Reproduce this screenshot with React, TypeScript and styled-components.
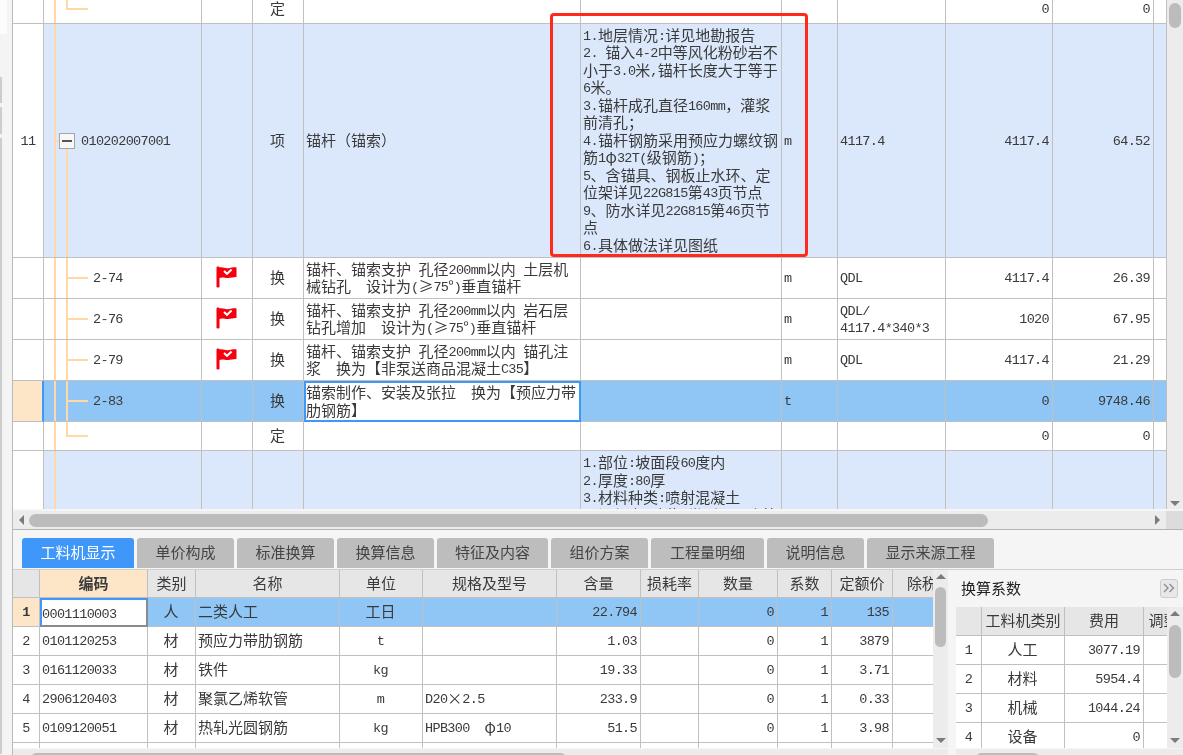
import { Fragment } from "react";
import { createGlobalStyle, styled } from "styled-components";

type Tree = "none" | "parent" | "child" | "last";
type Tone = "plain" | "item" | "active";

interface TopRow {
  h: number;
  tone: Tone;
  no?: string;
  tree: Tree;
  code?: string;
  flag?: boolean;
  kind?: string;
  name?: string;
  spec?: string;
  unit?: string;
  expr?: string;
  qty?: string;
  price?: string;
  editing?: boolean;
}

const featureText = `1.地层情况:详见地勘报告
2. 锚入4-2中等风化粉砂岩不小于3.0米,锚杆长度大于等于6米。
3.锚杆成孔直径160mm\uFF0C灌浆前清孔\uFF1B
4.锚杆钢筋采用预应力螺纹钢筋1φ32T(级钢筋)\uFF1B
5、含锚具、钢板止水环、定位架详见22G815第43页节点
9、防水详见22G815第46页节点
6.具体做法详见图纸`;

const topRows: TopRow[] = [
  { h: 29, tone: "plain", tree: "last", kind: "定", qty: "0", price: "0" },
  {
    h: 234,
    tone: "item",
    no: "11",
    tree: "parent",
    code: "010202007001",
    kind: "项",
    name: "锚杆\uFF08锚索\uFF09",
    spec: featureText,
    unit: "m",
    expr: "4117.4",
    qty: "4117.4",
    price: "64.52",
  },
  {
    h: 41,
    tone: "plain",
    tree: "child",
    code: "2-74",
    flag: true,
    kind: "换",
    name: "锚杆、锚索支护 孔径200mm以内 土层机械钻孔  设计为(≥75°)垂直锚杆",
    unit: "m",
    expr: "QDL",
    qty: "4117.4",
    price: "26.39",
  },
  {
    h: 41,
    tone: "plain",
    tree: "child",
    code: "2-76",
    flag: true,
    kind: "换",
    name: "锚杆、锚索支护 孔径200mm以内 岩石层钻孔增加  设计为(≥75°)垂直锚杆",
    unit: "m",
    expr: "QDL/\n4117.4*340*3",
    qty: "1020",
    price: "67.95",
  },
  {
    h: 41,
    tone: "plain",
    tree: "child",
    code: "2-79",
    flag: true,
    kind: "换",
    name: "锚杆、锚索支护 孔径200mm以内 锚孔注浆  换为【非泵送商品混凝土C35】",
    unit: "m",
    expr: "QDL",
    qty: "4117.4",
    price: "21.29",
  },
  {
    h: 41,
    tone: "active",
    tree: "child",
    code: "2-83",
    kind: "换",
    name: "锚索制作、安装及张拉  换为【预应力带肋钢筋】",
    unit: "t",
    qty: "0",
    price: "9748.46",
    editing: true,
  },
  { h: 29, tone: "plain", tree: "last", kind: "定", qty: "0", price: "0" },
  {
    h: 120,
    tone: "item",
    tree: "none",
    spec: "1.部位:坡面段60度内\n2.厚度:80厚\n3.材料种类:喷射混凝土\n4.混凝土(砂浆)类别、强度等级",
  },
];

const topCols = [31, 158, 51, 51, 277, 201, 56, 108, 107, 101, 13];

const tabs = ["工料机显示", "单价构成", "标准换算", "换算信息", "特征及内容", "组价方案", "工程量明细", "说明信息", "显示来源工程"];
const tabWidths = [112, 97, 97, 97, 111, 97, 113, 97, 127];

const materialCols = [27, 108, 48, 144, 83, 134, 84, 58, 79, 54, 61, 59];
const materialHead = ["", "编码", "类别", "名称", "单位", "规格及型号", "含量", "损耗率", "数量", "系数", "定额价", "除税"];
const materials = [
  ["0001110003", "人", "二类人工", "工日", "", "22.794", "", "0", "1", "135", ""],
  ["0101120253", "材", "预应力带肋钢筋", "t", "", "1.03", "", "0", "1", "3879", ""],
  ["0161120033", "材", "铁件", "kg", "", "19.33", "", "0", "1", "3.71", ""],
  ["2906120403", "材", "聚氯乙烯软管", "m", "D20×2.5", "233.9", "", "0", "1", "0.33", ""],
  ["0109120051", "材", "热轧光圆钢筋", "kg", "HPB300  φ10", "51.5", "", "0", "1", "3.98", ""],
  ["", "", "", "", "", "", "", "", "", "", ""],
];

const factorCols = [26, 83, 79, 40];
const factors = [
  ["1", "人工", "3077.19"],
  ["2", "材料", "5954.4"],
  ["3", "机械", "1044.24"],
  ["4", "设备", "0"],
];

// latin runs are narrower than the CJK text around them, like the old bitmap font
function mix(text?: string) {
  if (!text) return null;
  return text.split(/([\x20-\x7E]+)/).map((part, i) =>
    /^[\x20-\x7E]+$/.test(part) ? <Lat key={i}>{part}</Lat> : <Fragment key={i}>{part}</Fragment>
  );
}

function Flag() {
  return (
    <FlagIcon width="21" height="22" viewBox="0 0 21 22">
      <rect x="0.5" y="0.5" width="3" height="21" rx="1.2" fill="#f6000f" />
      <path d="M3 1.5 C7 0.5 9 2.5 12 2.2 C15 2 18 1 20.5 1.5 L20.5 11 C18 10.8 15 11.8 12 12 C9 12.2 7 10.5 3 12 Z" fill="#f6000f" />
      <path d="M8 5 L11 7.8 L15.6 3.6" fill="none" stroke="#fff" strokeWidth="2" />
    </FlagIcon>
  );
}

function TreeLines({ tree }: { tree: Tree }) {
  if (tree === "parent") {
    return (
      <>
        <OuterLine />
        <Tick />
        <InnerLine $from="50%" $to="0" />
        <ExpandBox />
      </>
    );
  }
  return (
    <>
      <OuterLine />
      {tree === "child" && <InnerLine $from="0" $to="0" />}
      {tree === "last" && <InnerLine $from="0" $to="50%" />}
      {tree !== "none" && <Branch />}
    </>
  );
}

export default function App() {
  return (
    <Page>
      <GlobalStyle />
      <LeftStrip>
        <StripBlock />
        <StripRail $h={26} />
        <StripRail $h={27} />
        <StripRail $h={616} />
      </LeftStrip>
      <Main>
        <TopPane>
          <TopBody>
            <GridClip>
              <ScrolledSheet $width={1154}>
                <colgroup>
                  {topCols.map((w, i) => (
                    <Col key={i} $w={w} />
                  ))}
                </colgroup>
                <tbody>
                  {topRows.map((r, i) => (
                    <Row key={i} $h={r.h} $tone={r.tone}>
                      <NoCell $active={r.tone === "active"}>{mix(r.no)}</NoCell>
                      <TreeCell $indent={r.tree === "parent" ? 37 : 49}>
                        <TreeLines tree={r.tree} />
                        {mix(r.code)}
                      </TreeCell>
                      <Cell $align="center">{r.flag && <Flag />}</Cell>
                      <Cell $align="center">{r.kind}</Cell>
                      {r.editing ? <EditCell>{mix(r.name)}</EditCell> : <Cell>{mix(r.name)}</Cell>}
                      <SpecCell $top={r.tree === "none"}>{mix(r.spec)}</SpecCell>
                      <Cell>{mix(r.unit)}</Cell>
                      <Cell>{mix(r.expr)}</Cell>
                      <Cell $align="right">{mix(r.qty)}</Cell>
                      <Cell $align="right">{mix(r.price)}</Cell>
                      <Cell />
                    </Row>
                  ))}
                </tbody>
              </ScrolledSheet>
              <RedFrame />
            </GridClip>
            <VBar>
              <VThumb $top={3} $h={25} />
              <ArrowSlot $bottom={3}>
                <Arrow $dir="down" />
              </ArrowSlot>
            </VBar>
          </TopBody>
          <HBar>
            <ArrowLeftSlot>
              <Arrow $dir="left" />
            </ArrowLeftSlot>
            <HThumb $w={959} />
            <ArrowRightSlot>
              <Arrow $dir="right" />
            </ArrowRightSlot>
            <Corner />
          </HBar>
        </TopPane>

        <TabRow>
          {tabs.map((t, i) => (
            <Tab key={t} $active={i === 0} $w={tabWidths[i]}>
              {t}
            </Tab>
          ))}
        </TabRow>

        <LowerPane>
          <MaterialSide>
            <MaterialBody>
              <LowerClip $w={920}>
                <Sheet $width={939}>
                  <colgroup>
                    {materialCols.map((w, i) => (
                      <Col key={i} $w={w} />
                    ))}
                  </colgroup>
                  <tbody>
                    <HeadRow $h={28}>
                      {materialHead.map((h, i) => (
                        <HeadCell key={i} $current={i === 1}>
                          {h}
                        </HeadCell>
                      ))}
                    </HeadRow>
                    {materials.map((m, i) => (
                      <Row key={i} $h={29} $tone={i === 0 ? "active" : "plain"}>
                        <NoCell $active={i === 0} $center>
                          {i < 5 ? <Lat>{i + 1}</Lat> : null}
                        </NoCell>
                        {i === 0 ? <CodeEditCell>{mix(m[0])}</CodeEditCell> : <Cell>{mix(m[0])}</Cell>}
                        <Cell $align="center">{m[1]}</Cell>
                        <Cell>{m[2]}</Cell>
                        <Cell $align="center">{mix(m[3])}</Cell>
                        <Cell>{mix(m[4])}</Cell>
                        <Cell $align="right">{mix(m[5])}</Cell>
                        <Cell>{m[6]}</Cell>
                        <Cell $align="right">{mix(m[7])}</Cell>
                        <Cell $align="right">{mix(m[8])}</Cell>
                        <Cell $align="right">{mix(m[9])}</Cell>
                        <Cell />
                      </Row>
                    ))}
                  </tbody>
                </Sheet>
              </LowerClip>
              <VBar $w={15}>
                <ArrowSlot $top={4}>
                  <Arrow $dir="up" />
                </ArrowSlot>
                <VThumb $top={17} $h={60} />
                <ArrowSlot $bottom={5}>
                  <Arrow $dir="down" />
                </ArrowSlot>
              </VBar>
            </MaterialBody>
            <SlimBar>
              <SlimThumb $left={17} $w={537} />
            </SlimBar>
          </MaterialSide>

          <FactorSide>
            <FactorTitle>
              换算系数
              <CollapseButton>
                <svg width="12" height="10" viewBox="0 0 12 10">
                  <path d="M1 1 L5 5 L1 9 M6.5 1 L10.5 5 L6.5 9" fill="none" stroke="#8a8f96" strokeWidth="1.4" />
                </svg>
              </CollapseButton>
            </FactorTitle>
            <FactorBody>
              <LowerClip $w={211}>
                <Sheet $width={228}>
                  <colgroup>
                    {factorCols.map((w, i) => (
                      <Col key={i} $w={w} />
                    ))}
                  </colgroup>
                  <tbody>
                    <HeadRow $h={29}>
                      <HeadCell />
                      <HeadCell>工料机类别</HeadCell>
                      <HeadCell>费用</HeadCell>
                      <HeadCell>调整</HeadCell>
                    </HeadRow>
                    {factors.map((f) => (
                      <Row key={f[0]} $h={29} $tone="plain">
                        <NoCell $center>{mix(f[0])}</NoCell>
                        <Cell $align="center">{f[1]}</Cell>
                        <Cell $align="right">{mix(f[2])}</Cell>
                        <Cell />
                      </Row>
                    ))}
                  </tbody>
                </Sheet>
              </LowerClip>
              <VBar>
                <ArrowSlot $top={4}>
                  <Arrow $dir="up" />
                </ArrowSlot>
                <VThumb $top={18} $h={53} />
                <ArrowSlot $bottom={5}>
                  <Arrow $dir="down" />
                </ArrowSlot>
              </VBar>
            </FactorBody>
            <SlimBar>
              <SlimThumb $left={19} $w={65} />
            </SlimBar>
          </FactorSide>
        </LowerPane>
      </Main>
    </Page>
  );
}

const GlobalStyle = createGlobalStyle`
  html, body {
    margin: 0;
    padding: 0;
    background: #f5f5f5;
  }
`;

const Page = styled.div`
  display: flex;
  width: 1183px;
  height: 755px;
  overflow: hidden;
  background: #f5f5f5;
  color: #3a3a3a;
  font-family: "Noto Sans CJK SC", "Liberation Sans", sans-serif;
  font-size: 15px;
  line-height: 17.5px;
  filter: blur(0.35px);
`;

const LeftStrip = styled.div`
  width: 13px;
  flex: none;
  display: flex;
  flex-direction: column;
  gap: 4px;
  box-sizing: border-box;
  background: #f4f4f4;
  border-right: 1px solid #b9b9b9;
`;

const StripBlock = styled.div`
  width: 7px;
  height: 34px;
  margin-bottom: 39px;
  background: #fcfcfc;
  box-shadow: 0 38px 0 -37px #cfcfcf;
`;

const StripRail = styled.div<{ $h: number }>`
  width: 2px;
  height: ${(p) => p.$h}px;
  flex: none;
  background: #cdcdcd;
`;

const Main = styled.div`
  flex: 1;
  min-width: 0;
  display: flex;
  flex-direction: column;
`;

const TopPane = styled.div`
  height: 530px;
  flex: none;
  display: flex;
  flex-direction: column;
  box-sizing: border-box;
  border-bottom: 1px solid #b5b5b5;
`;

const TopBody = styled.div`
  height: 509px;
  flex: none;
  display: flex;
`;

const GridClip = styled.div`
  position: relative;
  flex: 1;
  min-width: 0;
  overflow: hidden;
  background: #fff;
`;

const Sheet = styled.table<{ $width: number }>`
  width: ${(p) => p.$width}px;
  table-layout: fixed;
  border-collapse: separate;
  border-spacing: 0;
`;

// the upper grid is scrolled a little, its first row is cut by the pane edge
const ScrolledSheet = styled(Sheet)`
  margin-top: -5px;
`;

const Col = styled.col<{ $w: number }>`
  width: ${(p) => p.$w}px;
`;

const toneColors: Record<Tone, string> = {
  plain: "#ffffff",
  item: "#dbe8fb",
  active: "#90c6f6",
};

const Row = styled.tr<{ $h: number; $tone: Tone }>`
  height: ${(p) => p.$h}px;
  background: ${(p) => toneColors[p.$tone]};
`;

const Cell = styled.td<{ $align?: "center" | "right"; $top?: boolean }>`
  box-sizing: border-box;
  padding: ${(p) => (p.$top ? "2px 3px 0 2px" : "0 3px 2px 2px")};
  overflow: hidden;
  border-right: 1px solid #c0c0c0;
  border-bottom: 1px solid #c0c0c0;
  text-align: ${(p) => p.$align ?? "left"};
  vertical-align: ${(p) => (p.$top ? "top" : "middle")};
  white-space: pre-wrap;
  word-break: break-all;
`;

const SpecCell = styled(Cell)`
  padding-right: 0;
`;

const NoCell = styled(Cell)<{ $active?: boolean; $center?: boolean }>`
  position: relative;
  padding: 0 0 2px;
  text-align: center;
  background: ${(p) => (p.$active ? "#fde5c8" : "#fff")};
  font-weight: ${(p) => (p.$active ? 700 : 400)};
  ${(p) => (p.$active && !p.$center ? "border-right: 2px solid #3f97f9;" : "")}
`;

const TreeCell = styled(Cell)<{ $indent: number }>`
  position: relative;
  padding-left: ${(p) => p.$indent}px;
`;

const EditCell = styled(Cell)`
  padding: 0 1px 2px 0;
  background: #fff;
  border: 2px solid #3f97f9;
`;

const CodeEditCell = styled(Cell)`
  padding: 0 1px 0 0;
  background: #fff;
  border-top: 2px solid #3f97f9;
  border-left: 2px solid #3f97f9;
  border-right: 2px solid #8a8a8a;
  border-bottom: 2px solid #8a8a8a;
`;

const Lat = styled.span`
  font-family: "Liberation Mono", monospace;
  font-size: 13.5px;
  letter-spacing: -0.66px;
  line-height: 0;
  vertical-align: 1px;
`;

const OuterLine = styled.span`
  position: absolute;
  left: 10px;
  top: 0;
  bottom: -1px;
  width: 2px;
  background: #ffd8a6;
`;

const InnerLine = styled.span<{ $from: string; $to: string }>`
  position: absolute;
  left: 22px;
  top: ${(p) => p.$from};
  bottom: ${(p) => p.$to};
  width: 2px;
  margin-bottom: -1px;
  background: #ffd8a6;
`;

const Branch = styled.span`
  position: absolute;
  left: 23px;
  top: 50%;
  width: 21px;
  height: 2px;
  margin-top: -1px;
  background: #ffd8a6;
`;

const Tick = styled.span`
  position: absolute;
  left: 11px;
  top: 50%;
  width: 6px;
  height: 2px;
  margin-top: -1px;
  background: #ffd8a6;
`;

const ExpandBox = styled.span`
  position: absolute;
  left: 15px;
  top: 50%;
  width: 16px;
  height: 16px;
  margin-top: -8px;
  box-sizing: border-box;
  background: #f7f7f7;
  border: 1px solid #a5a5a5;

  &::after {
    content: "";
    position: absolute;
    left: 2px;
    right: 2px;
    top: 6px;
    height: 2px;
    background: #555;
  }
`;

const FlagIcon = styled.svg`
  display: block;
  margin: 0 auto;
`;

const RedFrame = styled.div`
  position: absolute;
  left: 537px;
  top: 13px;
  width: 258px;
  height: 244px;
  box-sizing: border-box;
  border: 3px solid #ff2a1a;
  border-radius: 4px;
  pointer-events: none;
`;

const VBar = styled.div<{ $w?: number }>`
  position: relative;
  width: ${(p) => p.$w ?? 16}px;
  flex: none;
  background: #ececec;
`;

const VThumb = styled.div<{ $top: number; $h: number }>`
  position: absolute;
  left: 2px;
  right: 2px;
  top: ${(p) => p.$top}px;
  height: ${(p) => p.$h}px;
  border-radius: 6px;
  background: #bcbcbc;
`;

const ArrowSlot = styled.div<{ $top?: number; $bottom?: number }>`
  position: absolute;
  left: 0;
  right: 0;
  display: flex;
  justify-content: center;
  ${(p) => (p.$top !== undefined ? `top: ${p.$top}px;` : "")}
  ${(p) => (p.$bottom !== undefined ? `bottom: ${p.$bottom}px;` : "")}
`;

const Arrow = styled.span<{ $dir: "up" | "down" | "left" | "right" }>`
  display: block;
  width: 0;
  height: 0;
  ${(p) =>
    p.$dir === "up"
      ? "border-left: 5px solid transparent; border-right: 5px solid transparent; border-bottom: 5px solid #7b7b7b;"
      : p.$dir === "down"
        ? "border-left: 5px solid transparent; border-right: 5px solid transparent; border-top: 5px solid #7b7b7b;"
        : p.$dir === "left"
          ? "border-top: 5px solid transparent; border-bottom: 5px solid transparent; border-right: 5px solid #7b7b7b;"
          : "border-top: 5px solid transparent; border-bottom: 5px solid transparent; border-left: 5px solid #7b7b7b;"}
`;

const HBar = styled.div`
  flex: 1;
  display: flex;
  align-items: center;
  margin-top: 2px;
  background: #ececec;
`;

const ArrowLeftSlot = styled.div`
  width: 16px;
  flex: none;
  display: flex;
  justify-content: center;
`;

const ArrowRightSlot = styled.div`
  flex: 1;
  display: flex;
  justify-content: flex-end;
  padding-right: 6px;
`;

const HThumb = styled.div<{ $w: number }>`
  width: ${(p) => p.$w}px;
  height: 13px;
  flex: none;
  border-radius: 7px;
  background: #bcbcbc;
`;

const Corner = styled.div`
  width: 17px;
  height: 100%;
  flex: none;
  background: #dcdcdc;
`;

const TabRow = styled.div`
  height: 38px;
  flex: none;
  display: flex;
  align-items: flex-end;
  gap: 3px;
  padding-left: 9px;
  padding-bottom: 1px;
  box-sizing: content-box;
  border-bottom: 1px solid #cfcfcf;
`;

const Tab = styled.div<{ $active: boolean; $w: number }>`
  width: ${(p) => p.$w}px;
  height: 30px;
  flex: none;
  display: flex;
  align-items: center;
  justify-content: center;
  padding-bottom: 2px;
  box-sizing: border-box;
  border-radius: 3px 3px 0 0;
  background: ${(p) => (p.$active ? "#3f97f9" : "#bdbdbd")};
  color: ${(p) => (p.$active ? "#fff" : "#444")};
`;

const LowerPane = styled.div`
  flex: 1;
  min-height: 0;
  display: flex;
  gap: 8px;
`;

const MaterialSide = styled.div`
  width: 935px;
  flex: none;
  display: flex;
  flex-direction: column;
`;

const MaterialBody = styled.div`
  height: 178px;
  flex: none;
  display: flex;
`;

const LowerClip = styled.div<{ $w: number }>`
  width: ${(p) => p.$w}px;
  flex: none;
  overflow: hidden;
  background: #fff;
`;

const HeadRow = styled.tr<{ $h: number }>`
  height: ${(p) => p.$h}px;
  background: #e6e6e6;
`;

const HeadCell = styled.td<{ $current?: boolean }>`
  box-sizing: border-box;
  padding: 0 0 2px;
  overflow: hidden;
  text-align: center;
  white-space: nowrap;
  border-right: 1px solid #c0c0c0;
  border-bottom: 1px solid #c0c0c0;
  ${(p) => (p.$current ? "background: #fde5c8; font-weight: 700;" : "")}
`;

const SlimBar = styled.div`
  position: relative;
  flex: 1;
  margin-top: 1px;
  overflow: hidden;
  background: #ececec;
`;

const SlimThumb = styled.div<{ $left: number; $w: number }>`
  position: absolute;
  left: ${(p) => p.$left}px;
  top: 4px;
  width: ${(p) => p.$w}px;
  height: 13px;
  border-radius: 7px;
  background: #bcbcbc;
`;

const FactorSide = styled.div`
  flex: 1;
  min-width: 0;
  display: flex;
  flex-direction: column;
`;

const FactorTitle = styled.div`
  height: 37px;
  flex: none;
  display: flex;
  align-items: center;
  justify-content: space-between;
  box-sizing: border-box;
  padding: 0 5px 1px;
  color: #222;
`;

const CollapseButton = styled.div`
  width: 18px;
  height: 19px;
  display: flex;
  align-items: center;
  justify-content: center;
  box-sizing: border-box;
  border: 1px solid #cdcdcd;
  border-radius: 3px;
  background: #e8e8e8;
`;

const FactorBody = styled.div`
  height: 141px;
  flex: none;
  display: flex;
`;
